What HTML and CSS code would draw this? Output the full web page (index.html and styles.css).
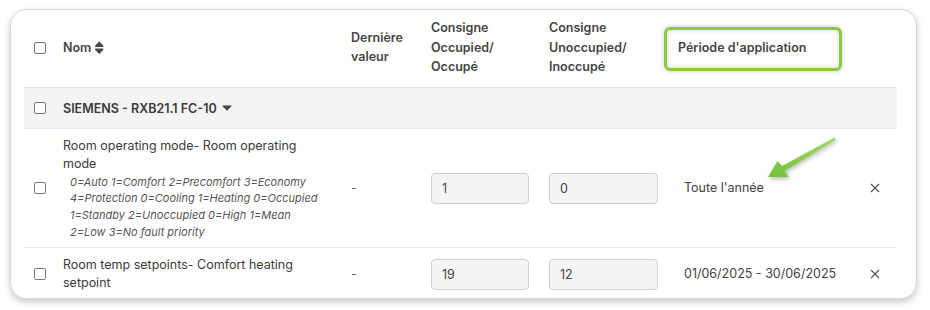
FILE: index.html
```html
<!DOCTYPE html>
<html lang="fr">
<head>
<meta charset="utf-8">
<title>Points de consigne</title>
<link rel="stylesheet" href="styles.css">
</head>
<body>
<div class="page">
  <div class="card">
    <table class="grid">
      <colgroup>
        <col class="w-check">
        <col class="w-name">
        <col class="w-last">
        <col class="w-occ">
        <col class="w-unocc">
        <col class="w-period">
        <col class="w-action">
      </colgroup>
      <thead>
        <tr>
          <th class="cell-check"><input type="checkbox" class="box"></th>
          <th><span class="sortable">Nom
            <svg class="sort" viewBox="0 0 320 512" aria-hidden="true"><path d="M137.4 41.4c12.5-12.5 32.8-12.5 45.3 0l128 128c9.2 9.2 11.9 22.9 6.9 34.9s-16.6 19.8-29.6 19.8H32c-12.9 0-24.6-7.8-29.6-19.8s-2.2-25.7 6.9-34.9l128-128zm0 429.3l-128-128c-9.2-9.2-11.9-22.9-6.9-34.9s16.6-19.8 29.6-19.8H288c12.9 0 24.6 7.8 29.6 19.8s2.2 25.7-6.9 34.9l-128 128c-12.5 12.5-32.8 12.5-45.3 0z"/></svg></span></th>
          <th>Dernière valeur</th>
          <th>Consigne Occupied/ Occupé</th>
          <th>Consigne Unoccupied/ Inoccupé</th>
          <th class="head-period">Période d'application</th>
          <th></th>
        </tr>
      </thead>
      <tbody>
        <tr class="group">
          <td class="cell-check"><input type="checkbox" class="box"></td>
          <td colspan="6" class="group-name">SIEMENS - RXB21.1 FC-10
            <svg class="caret" viewBox="0 0 10 6" aria-hidden="true"><path d="M0.6 0.4h8.8c.4 0 .6.4.3.7L5.3 5.4c-.2.2-.4.2-.6 0L.3 1.1C0 .8.2.4.6.4z"/></svg></td>
        </tr>
        <tr class="item">
          <td class="cell-check"><input type="checkbox" class="box"></td>
          <td class="name">
            <span class="title">Room operating mode- Room operating mode</span>
            <span class="hint">0=Auto 1=Comfort 2=Precomfort 3=Economy<br>4=Protection 0=Cooling 1=Heating 0=Occupied<br>1=Standby 2=Unoccupied 0=High 1=Mean<br>2=Low 3=No fault priority</span>
          </td>
          <td class="muted">-</td>
          <td><input class="field" type="text" value="1" readonly></td>
          <td><input class="field" type="text" value="0" readonly></td>
          <td class="period">Toute l'année</td>
          <td class="action"><svg class="remove" viewBox="0 0 10 10" aria-hidden="true"><path d="M1 1l8 8M9 1l-8 8"/></svg></td>
        </tr>
        <tr class="item">
          <td class="cell-check"><input type="checkbox" class="box"></td>
          <td class="name"><span class="title">Room temp setpoints- Comfort heating setpoint</span></td>
          <td class="muted">-</td>
          <td><input class="field" type="text" value="19" readonly></td>
          <td><input class="field" type="text" value="12" readonly></td>
          <td class="period">01/06/2025 - 30/06/2025</td>
          <td class="action"><svg class="remove" viewBox="0 0 10 10" aria-hidden="true"><path d="M1 1l8 8M9 1l-8 8"/></svg></td>
        </tr>
      </tbody>
    </table>
  </div>

  <div class="highlight"></div>
  <svg class="pointer" viewBox="0 0 85 55" aria-hidden="true">
    <defs>
      <linearGradient id="pointerFill" x1="1" y1="0" x2="0" y2="1">
        <stop offset="0" stop-color="#a6da64"/>
        <stop offset="1" stop-color="#6fc23a"/>
      </linearGradient>
    </defs>
    <path d="M8 47L17.5 31 22 36 74.6 7.6 75.8 10 24.6 41 28.8 47z" fill="url(#pointerFill)"/>
  </svg>
</div>
</body>
</html>
```

FILE: styles.css
```css
* {
  box-sizing: border-box;
}

body {
  margin: 0;
  background: #ffffff;
  font-family: Inter, "Noto Sans", sans-serif;
  font-size: 12.5px;
  color: #3b3b3b;
}

.page {
  position: relative;
  width: 930px;
  height: 310px;
  padding: 9px 0 0 10px;
}

.card {
  width: 907px;
  height: 290px;
  border: 1px solid #d8d8d8;
  border-radius: 16px;
  background: #ffffff;
  box-shadow: 0 3px 7px rgba(0, 0, 0, 0.22);
  overflow: hidden;
  padding-left: 13px;
}

.grid {
  width: 873px;
  border-collapse: collapse;
  table-layout: fixed;
}

.w-check { width: 29px; }
.w-name { width: 288px; }
.w-last { width: 80px; }
.w-occ { width: 118px; }
.w-unocc { width: 129px; }
.w-period { width: 182px; }
.w-action { width: 47px; }

.grid th {
  padding: 8px 10px 10px;
  text-align: left;
  vertical-align: middle;
  font-weight: 600;
  line-height: 19.5px;
  color: #454545;
  border-bottom: 1px solid #e4e4e4;
}

.grid td {
  padding: 6px 10px;
  vertical-align: middle;
  line-height: 18px;
  border-bottom: 1px solid #e6e6e6;
}

.grid .item td {
  padding-top: 8px;
  padding-bottom: 7px;
}

.grid .cell-check,
.grid .item .cell-check {
  padding: 0 0 0 10px;
}

.grid td.name {
  padding-right: 16px;
}

.box {
  appearance: none;
  display: block;
  width: 12px;
  height: 12px;
  margin: 0;
  border: 1px solid #777777;
  border-radius: 2px;
  background: #ffffff;
}

.sortable {
  display: inline-flex;
  align-items: center;
  gap: 4px;
}

.sort {
  width: 8.5px;
  height: 13.5px;
  fill: #4a4a4a;
}

.group td {
  background: #f4f4f4;
  padding-top: 12px;
  padding-bottom: 10px;
}

.group-name {
  font-weight: 600;
  color: #3a3a3a;
}

.caret {
  width: 10px;
  height: 6px;
  margin-left: 2px;
  vertical-align: 2px;
  fill: #444444;
}

.title {
  display: block;
  color: #3b3b3b;
}

.hint {
  display: block;
  padding: 1px 0 0 7px;
  font-size: 11px;
  font-style: italic;
  line-height: 16.7px;
  color: #555555;
  white-space: nowrap;
}

.muted {
  color: #666666;
}

.field {
  display: block;
  width: 100%;
  height: 31px;
  margin: 0;
  padding: 0 10px;
  border: 1px solid #cfcfcf;
  border-radius: 4px;
  background: #f5f5f5;
  font: inherit;
  color: #444444;
  outline: none;
}

.grid td.period {
  padding-left: 16px;
  white-space: nowrap;
  color: #424242;
}

.grid td.action {
  padding-left: 20px;
}

.remove {
  display: block;
  width: 10px;
  height: 10px;
  stroke: #555555;
  stroke-width: 1.2;
  fill: none;
}

/* annotation layer drawn over the table */
.highlight {
  position: absolute;
  left: 664px;
  top: 27px;
  width: 178px;
  height: 44px;
  border: 3px solid #8cc940;
  border-radius: 6px;
  box-shadow: 0 0 5px rgba(0, 0, 0, 0.22), inset 0 0 5px rgba(0, 0, 0, 0.18);
}

.pointer {
  position: absolute;
  left: 760px;
  top: 130px;
  width: 85px;
  height: 55px;
  filter: drop-shadow(1px 2px 2px rgba(0, 0, 0, 0.28));
}
```
